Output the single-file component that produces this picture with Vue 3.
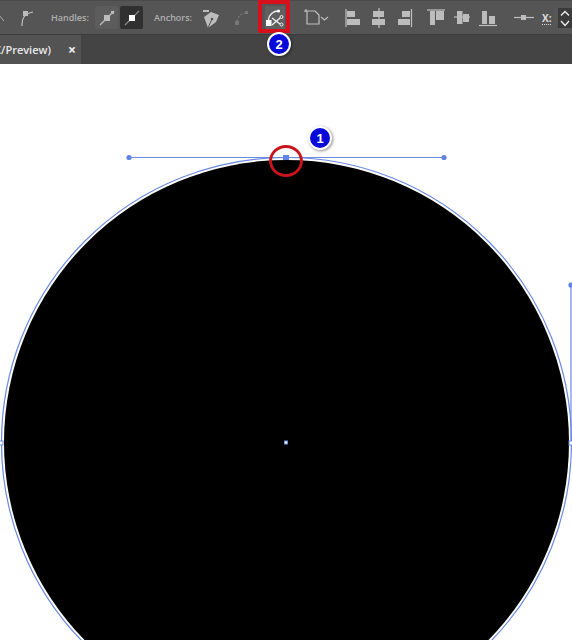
<script setup>
const alignIcons = [
  { m: 14, line: 'M2 4V22', rects: [[3, 6, 8, 6], [3, 14, 13, 6]] },
  { m: 6, line: 'M9 3V23', rects: [[3, 6, 11, 6], [2, 14, 13, 6]] },
  { m: 6, line: 'M15.5 4V22', rects: [[6, 6, 8, 6], [2, 14, 12, 6]] },
]
const distIcons = [
  { m: 10, line: 'M1 5H19', rects: [[4, 6, 5, 14], [10, 6, 8, 9]] },
  { m: 7, line: 'M1 12H17', rects: [[4, 6, 5.5, 13], [10, 9, 6, 8]] },
  { m: 5, line: 'M1 20.5H19', rects: [[4, 6, 5, 13], [11, 11, 6, 8]] },
]
</script>

<template>
  <div class="page">
    <header class="toolbar">
      <svg class="chev-left" width="8" height="34" viewBox="0 0 8 34"><path d="M-1 14L4 20" /></svg>
      <svg class="corner" width="14" height="18" viewBox="0 0 14 18">
        <path class="thin" d="M2 17C2 9 4 5 13 3" />
        <rect class="fill" x="3" y="2" width="5" height="5" />
      </svg>
      <span class="label handles">Handles:</span>
      <span class="btn raised">
        <svg width="16" height="16" viewBox="0 0 16 16"><path class="thin" d="M1 15L15 1" /><rect class="fill" x="5" y="5" width="6" height="6" /><rect class="fill" x="12" y="1" width="3" height="3" /></svg>
      </span>
      <span class="btn active">
        <svg width="16" height="16" viewBox="0 0 16 16"><path class="dim" d="M1 15L15 1" /><rect class="white" x="5" y="5" width="6" height="6" /></svg>
      </span>
      <span class="label anchors">Anchors:</span>
      <svg class="pen" width="18" height="20" viewBox="0 0 18 20">
        <path class="fill" d="M2 9L9 4L17 7L14 14L6 20Z" />
        <rect class="fill" x="1" y="2" width="6" height="2" />
        <path class="cut" d="M6 20L9.5 12" />
        <circle class="hole" cx="10" cy="11" r="1.3" />
      </svg>
      <svg class="disabled" width="16" height="16" viewBox="0 0 16 16">
        <path class="dimline" d="M3 11C4 6 8 3 12 3" />
        <rect class="dimfill" x="1" y="11" width="4" height="4" />
        <rect class="dimfill" x="11" y="1" width="3" height="3" />
      </svg>
      <span class="convert">
        <svg width="18" height="18" viewBox="0 0 18 18">
          <path class="white-line" d="M2.5 11C3 5 8 2 12 2" />
          <path class="white-line" d="M6 9L14 15M6 16L14 9" />
          <rect class="white" x="0" y="11" width="5.5" height="6" />
          <circle class="white" cx="12.5" cy="2" r="1.6" />
          <circle class="ring" cx="15.5" cy="8" r="1.5" />
          <circle class="ring" cx="15.5" cy="15.5" r="1.5" />
        </svg>
      </span>
      <svg class="doc" width="26" height="18" viewBox="0 0 26 18">
        <path class="thin" d="M3 2H11L15 6V15H3Z" />
        <path class="dotted" d="M0 2H3M2 0V3" />
        <path class="thin" d="M17 8L20.5 11L24 8" />
      </svg>
      <svg v-for="(ic, i) in alignIcons" :key="'a' + i" class="align" :style="{ marginLeft: ic.m + 'px' }" width="20" height="26" viewBox="0 0 20 26">
        <path class="thin" :d="ic.line" />
        <rect v-for="(r, j) in ic.rects" :key="j" class="fill" :x="r[0]" :y="r[1]" :width="r[2]" :height="r[3]" />
      </svg>
      <svg v-for="(ic, i) in distIcons" :key="'d' + i" class="align" :style="{ marginLeft: ic.m + 'px' }" width="20" height="26" viewBox="0 0 20 26">
        <path class="thin" :d="ic.line" />
        <rect v-for="(r, j) in ic.rects" :key="j" class="fill" :x="r[0]" :y="r[1]" :width="r[2]" :height="r[3]" />
      </svg>
      <svg class="dash" width="20" height="10" viewBox="0 0 20 10">
        <path class="thin" d="M0 4.5H20" />
        <rect class="fill" x="7" y="2" width="5" height="5" />
      </svg>
      <span class="x-label">X:</span>
      <span class="stepper">
        <svg width="10" height="20" viewBox="0 0 10 20"><path class="white-line" d="M1 7.5L5 3.5L9 7.5M1 13L5 17.5L9 13" /></svg>
      </span>
    </header>

    <nav class="tabs">
      <div class="tab">
        <span class="tab-title">C/Preview)</span>
        <span class="tab-close">×</span>
      </div>
    </nav>

    <main class="canvas">
      <svg class="art" width="572" height="576" viewBox="0 64 572 576">
        <circle cx="286.5" cy="442.5" r="282.5" fill="#000" />
        <circle class="path-line" cx="286.5" cy="442.5" r="285" />
        <path class="path-line" d="M129 157.5H444" />
        <path class="path-line" d="M571 285V443" />
        <circle class="handle" cx="129" cy="157.5" r="2.6" />
        <circle class="handle" cx="444" cy="157.5" r="2.6" />
        <circle class="handle" cx="571" cy="285" r="2.6" />
        <rect class="handle" x="283" y="155" width="6" height="5" />
        <rect class="anchor" x="284.5" y="441" width="3" height="3" />
        <rect class="anchor" x="-1" y="441" width="4" height="4" />
        <rect class="anchor" x="569" y="441" width="4" height="4" />
      </svg>
    </main>

    <div class="red-box"></div>
    <div class="red-ring"></div>
    <span class="badge badge-1">1</span>
    <span class="badge badge-2">2</span>
  </div>
</template>

<style>
html, body { margin: 0; background: #fff; }
</style>

<style scoped>
.page {
  position: relative;
  width: 572px;
  height: 640px;
  overflow: hidden;
  font-family: "Open Sans", "Liberation Sans", sans-serif;
  background: #fff;
}
.toolbar {
  display: flex;
  align-items: center;
  height: 33px;
  background: #555;
  border-top: 1px solid #4a4a4a;
  border-bottom: 1px solid #3c3c3c;
  box-sizing: content-box;
  color: #bdbdbd;
  overflow: hidden;
}
.toolbar svg { display: block; flex: none; }
.chev-left path { fill: none; stroke: #aaa; stroke-width: 1; }
.corner { margin-left: 12px; }
.thin { fill: none; stroke: #c0c0c0; stroke-width: 1.2; }
.fill { fill: #bcbcbc; stroke: none; }
.cut { fill: none; stroke: #555; stroke-width: 1; }
.hole { fill: #555; }
.dim { fill: none; stroke: #888; stroke-width: 1.2; }
.white { fill: #fff; }
.white-line { fill: none; stroke: #f0f0f0; stroke-width: 1.3; }
.ring { fill: #606060; stroke: #f0f0f0; stroke-width: 1; }
.dimline { fill: none; stroke: #777; stroke-width: 1.2; stroke-dasharray: 2 1.5; }
.dimfill { fill: #777; }
.dotted { fill: none; stroke: #c4c4c4; stroke-width: 1; }
.label {
  font-size: 9px;
  font-weight: 600;
  color: #b0b0b0;
  white-space: nowrap;
  width: 40px;
  flex: none;
}
.handles { margin-left: 17px; }
.btn {
  display: flex;
  align-items: center;
  justify-content: center;
  width: 23px;
  height: 23px;
  border-radius: 2px;
  flex: none;
}
.raised { background: #5c5c5c; margin-left: 4px; }
.active { background: #303030; margin-left: 2px; }
.anchors { margin-left: 11px; }
.pen { margin-left: 8px; }
.disabled { margin-left: 14px; }
.convert {
  display: flex;
  align-items: center;
  justify-content: center;
  width: 20px;
  height: 24px;
  margin-left: 15px;
  background: #606060;
  flex: none;
}
.doc { margin-left: 19px; }
.dash { margin-left: 16px; }
.x-label {
  margin-left: 8px;
  width: 12px;
  font-size: 10px;
  font-weight: 700;
  color: #ddd;
  text-decoration: underline dotted;
  text-underline-offset: 2px;
  flex: none;
}
.stepper {
  display: flex;
  justify-content: center;
  align-items: center;
  width: 14px;
  height: 20px;
  margin-left: 4px;
  background: #3a3a3a;
  flex: none;
}
.tabs {
  height: 29px;
  background: #444;
  display: flex;
}
.tab {
  width: 81px;
  box-sizing: border-box;
  background: #535353;
  display: flex;
  align-items: center;
  justify-content: flex-end;
  gap: 17px;
  padding-right: 5px;
  overflow: hidden;
  white-space: nowrap;
}
.tab-title { font-size: 11px; font-weight: 600; color: #e8e8e8; flex: none; }
.tab-close { font-size: 14px; font-weight: 700; line-height: 1; color: #eee; flex: none; }
.canvas { background: #fff; height: 576px; }
.art { display: block; overflow: hidden; }
.path-line { fill: none; stroke: #6b8ae0; stroke-width: 1.2; }
.handle { fill: #5f84e6; }
.anchor { fill: #fff; stroke: #6b8ae0; stroke-width: 1; }
.red-box {
  position: absolute;
  left: 258px;
  top: 0;
  width: 24px;
  height: 25px;
  border: 4px solid #d8101c;
}
.red-ring {
  position: absolute;
  left: 269px;
  top: 145px;
  width: 28px;
  height: 26px;
  border: 3.5px solid #c8141c;
  border-radius: 50%;
}
.badge {
  position: absolute;
  width: 20px;
  height: 20px;
  display: flex;
  align-items: center;
  justify-content: center;
  border-radius: 50%;
  background: #0a0ad8;
  border: 2px solid #fff;
  box-shadow: 1px 1px 3px rgba(0, 0, 0, 0.45);
  color: #fff;
  font-size: 13px;
  font-family: "Liberation Sans", sans-serif;
  font-weight: 700;
}
.badge-1 { left: 308px; top: 126px; }
.badge-2 { left: 267px; top: 32px; }
</style>
